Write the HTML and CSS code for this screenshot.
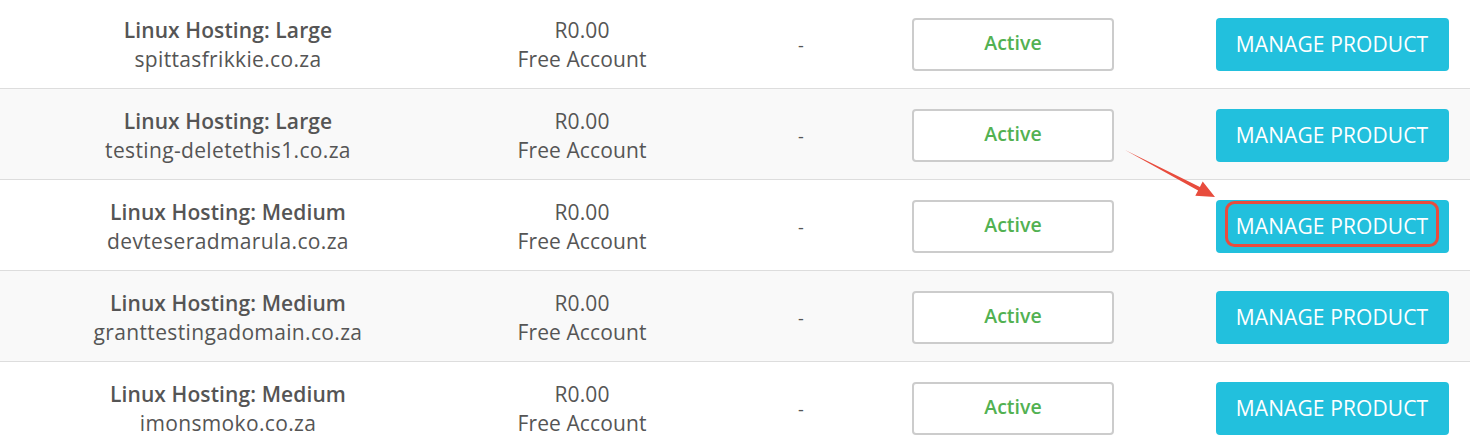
FILE: index.html
```html
<!DOCTYPE html>
<html>
<head>
<meta charset="utf-8">
<link rel="stylesheet" href="styles.css">
</head>
<body>
<div class="page">
  <div class="table">
    <div class="row">
      <div class="cell product"><div class="title">Linux Hosting: Large</div><div class="domain">spittasfrikkie.co.za</div></div>
      <div class="cell price"><div>R0.00</div><div>Free Account</div></div>
      <div class="cell due">-</div>
      <div class="cell status"><div class="badge">Active</div></div>
      <div class="cell action"><button class="btn">MANAGE PRODUCT</button></div>
    </div>
    <div class="row striped">
      <div class="cell product"><div class="title">Linux Hosting: Large</div><div class="domain">testing-deletethis1.co.za</div></div>
      <div class="cell price"><div>R0.00</div><div>Free Account</div></div>
      <div class="cell due">-</div>
      <div class="cell status"><div class="badge">Active</div></div>
      <div class="cell action"><button class="btn">MANAGE PRODUCT</button></div>
    </div>
    <div class="row">
      <div class="cell product"><div class="title">Linux Hosting: Medium</div><div class="domain">devteseradmarula.co.za</div></div>
      <div class="cell price"><div>R0.00</div><div>Free Account</div></div>
      <div class="cell due">-</div>
      <div class="cell status"><div class="badge">Active</div></div>
      <div class="cell action"><button class="btn">MANAGE PRODUCT</button></div>
    </div>
    <div class="row striped">
      <div class="cell product"><div class="title">Linux Hosting: Medium</div><div class="domain">granttestingadomain.co.za</div></div>
      <div class="cell price"><div>R0.00</div><div>Free Account</div></div>
      <div class="cell due">-</div>
      <div class="cell status"><div class="badge">Active</div></div>
      <div class="cell action"><button class="btn">MANAGE PRODUCT</button></div>
    </div>
    <div class="row">
      <div class="cell product"><div class="title">Linux Hosting: Medium</div><div class="domain">imonsmoko.co.za</div></div>
      <div class="cell price"><div>R0.00</div><div>Free Account</div></div>
      <div class="cell due">-</div>
      <div class="cell status"><div class="badge">Active</div></div>
      <div class="cell action"><button class="btn">MANAGE PRODUCT</button></div>
    </div>
  </div>
  <svg class="annotation" width="1470" height="448" viewBox="0 0 1470 448">
    <polygon fill="#e84c3d" points="1125,150 1199.9,186.9 1202.7,181.6 1215,197 1195.3,195.8 1198.1,190.5"/>
    <rect x="1226.5" y="202.5" width="211" height="43" rx="8" ry="8" fill="none" stroke="#e84c3d" stroke-width="3"/>
  </svg>
</div>
</body>
</html>
```
FILE: styles.css
```css
html, body {
  margin: 0;
  padding: 0;
  background: #ffffff;
  overflow: hidden;
}
.page {
  position: relative;
  width: 1470px;
  height: 448px;
  overflow: hidden;
  font-family: "Open Sans", "Liberation Sans", sans-serif;
  color: #555555;
}
.table {
  margin-top: -2px;
  display: flex;
  flex-direction: column;
}
.row {
  display: grid;
  grid-template-columns: 456px 252px 186px 238px 338px;
  height: 91px;
  box-sizing: border-box;
  border-bottom: 1px solid #dddddd;
  background: #ffffff;
}
.row.striped {
  background: #f9f9f9;
}
.cell {
  display: flex;
  flex-direction: column;
  align-items: center;
  justify-content: center;
  text-align: center;
  font-size: 21px;
  line-height: 29px;
  padding-top: 4px;
}
.title {
  font-weight: 600;
  letter-spacing: 0.1px;
}
.domain {
  letter-spacing: 0.35px;
}
.price {
  letter-spacing: 0.1px;
}
.due {
  font-size: 18px;
}
.status,
.action {
  padding-top: 2px;
}
.badge {
  box-sizing: border-box;
  width: 202px;
  height: 53px;
  border: 2px solid #cccccc;
  border-radius: 4px;
  background: #ffffff;
  color: #52b152;
  font-size: 19.5px;
  font-weight: 600;
  line-height: 45px;
}
.action {
  padding-left: 62px;
}
.btn {
  box-sizing: border-box;
  width: 233px;
  height: 53px;
  border: none;
  border-radius: 4px;
  background: #22c0dd;
  color: #ffffff;
  font-family: "Open Sans", "Liberation Sans", sans-serif;
  font-size: 21px;
  letter-spacing: 0.1px;
  padding: 0;
}
.annotation {
  position: absolute;
  left: 0;
  top: 0;
  pointer-events: none;
}
```
